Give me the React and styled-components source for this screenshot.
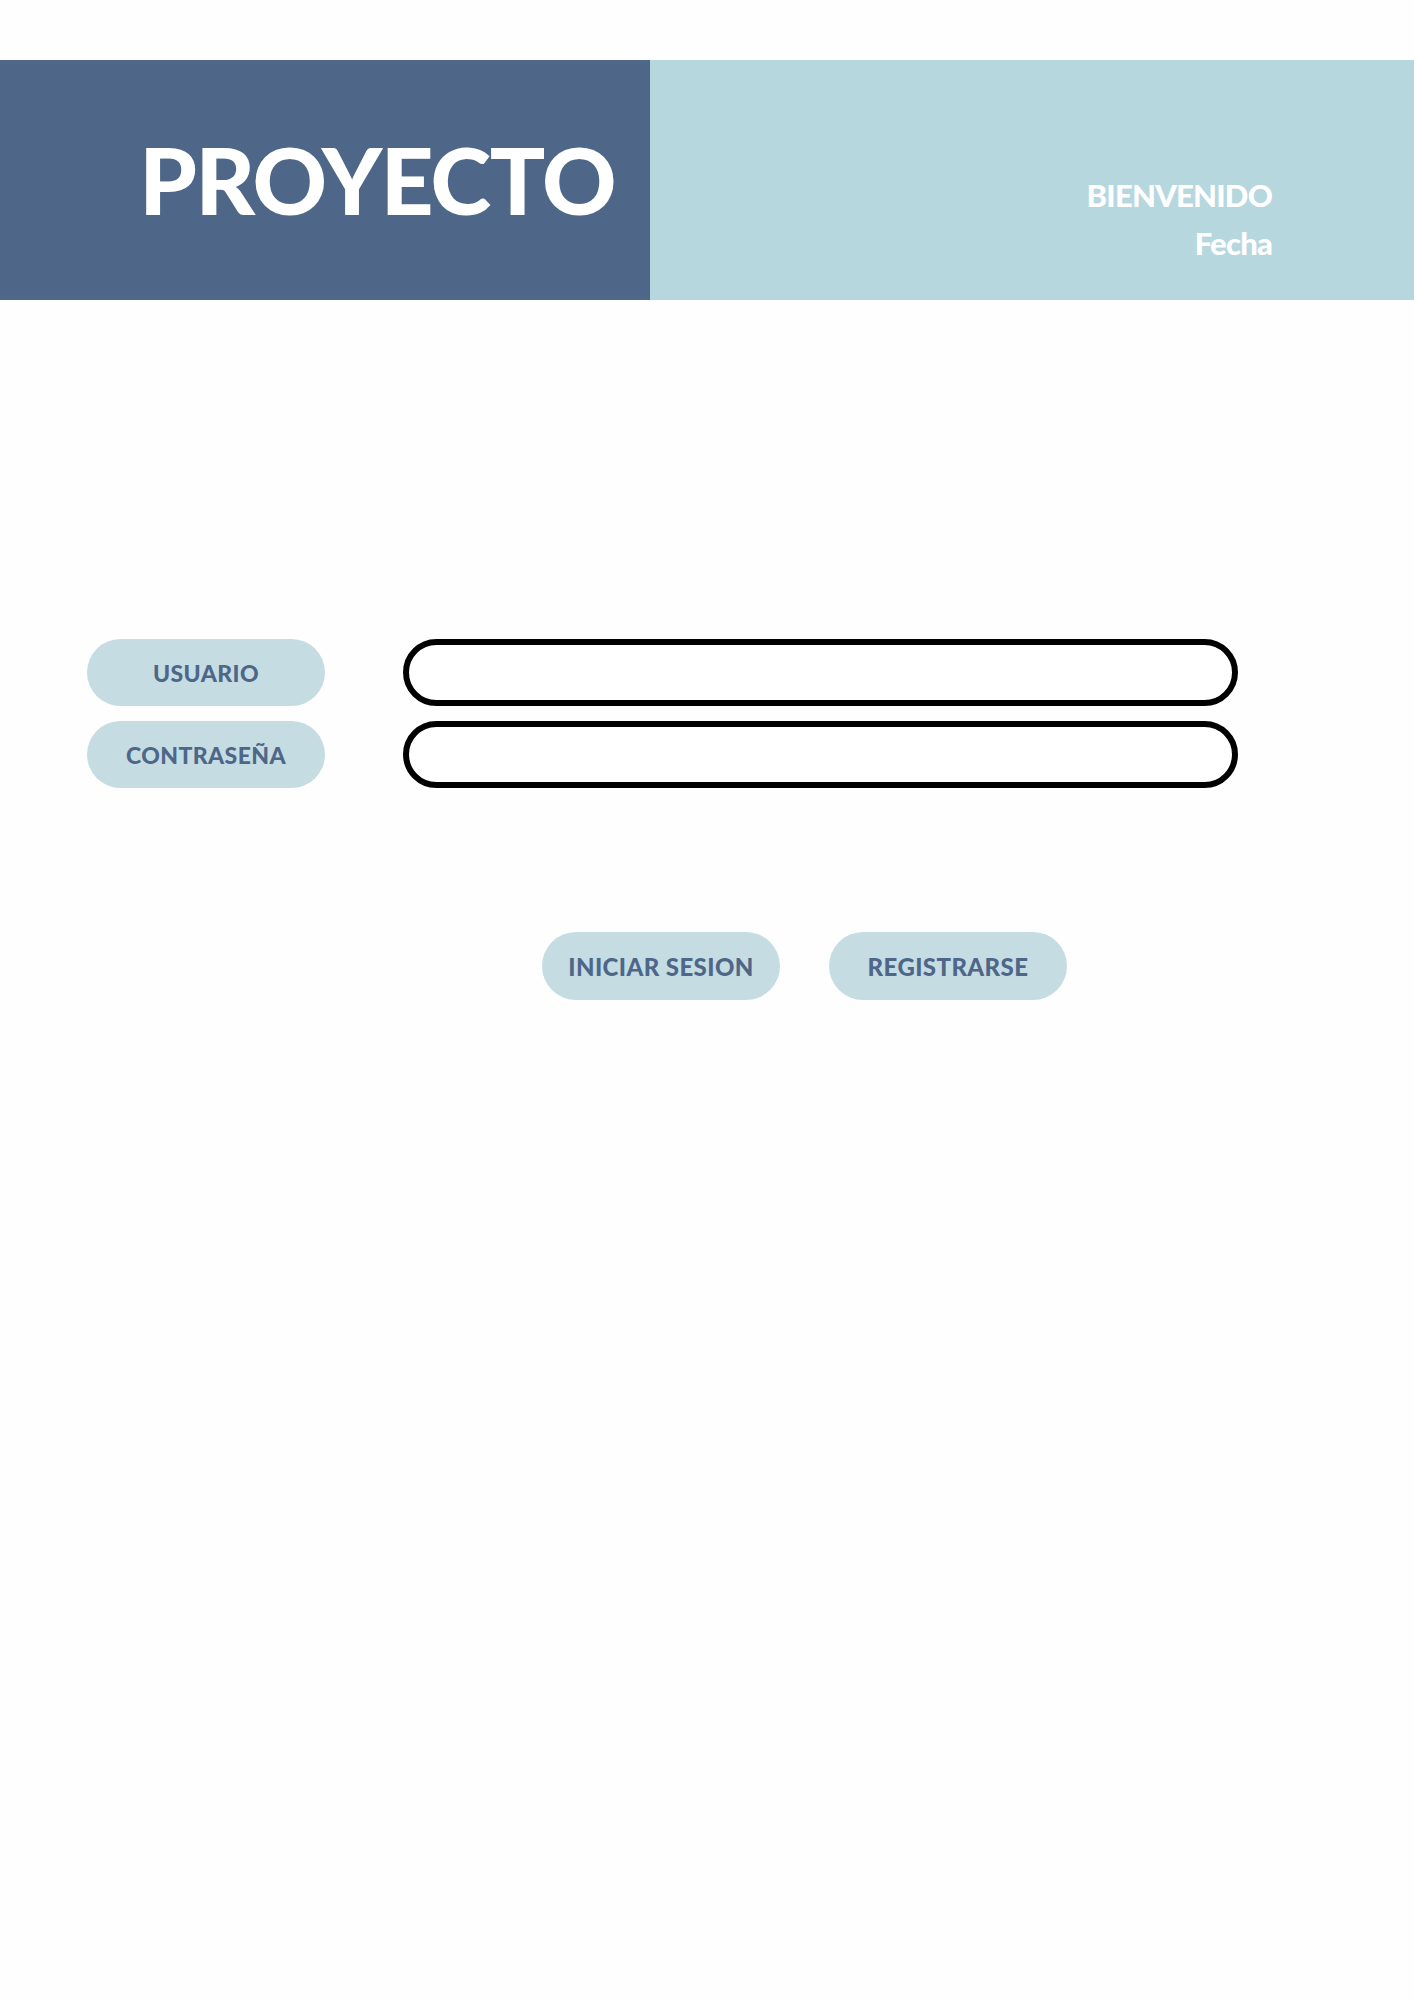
import React from "react";
import styled, { createGlobalStyle } from "styled-components";

const GlobalStyle = createGlobalStyle`
  body {
    margin: 0;
    padding: 0;
    background: #fefefe;
    font-family: "Lato", "Open Sans", sans-serif;
  }
  * { box-sizing: border-box; }
`;

const Page = styled.div`
  width: 1414px;
  min-height: 2000px;
  padding-top: 60px;
`;

const Header = styled.header`
  display: flex;
  height: 240px;
`;

const BrandPanel = styled.div`
  width: 650px;
  background: #4e6789;
  display: flex;
  align-items: center;
  justify-content: flex-end;
  padding-right: 35px;
`;

const Brand = styled.h1`
  margin: 0;
  color: #fff;
  font-family: "Lato", sans-serif;
  font-weight: 900;
  font-size: 92px;
  line-height: 1;
  letter-spacing: -1.5px;
`;

const WelcomePanel = styled.div`
  flex: 1;
  background: #b6d7de;
  display: flex;
  flex-direction: column;
  align-items: flex-end;
  justify-content: flex-end;
  padding: 0 142px 33px 0;
`;

const WelcomeText = styled.div`
  color: #fff;
  font-family: "Lato", sans-serif;
  font-weight: 900;
  font-size: 31px;
  line-height: 48px;
  letter-spacing: -0.8px;
`;

const Form = styled.form`
  display: grid;
  grid-template-columns: 238px 835px;
  column-gap: 78px;
  row-gap: 15px;
  margin: 339px 0 0 87px;
`;

const Pill = styled.div`
  width: 238px;
  height: 67px;
  border-radius: 34px;
  background: #c5dde2;
  color: #4e6789;
  display: flex;
  align-items: center;
  justify-content: center;
  font-family: "Lato", sans-serif;
  font-weight: 900;
  font-size: ${(p) => p.$size || 23}px;
  letter-spacing: 0.4px;
`;

const Field = styled.input`
  height: 67px;
  border: 6px solid #000;
  border-radius: 34px;
  background: #fff;
  outline: none;
  padding: 0 28px;
  font-size: 20px;
`;

const Actions = styled.div`
  display: flex;
  gap: 49px;
  margin: 144px 0 0 542px;
`;

const Button = styled(Pill).attrs({ as: "button" })`
  height: 68px;
  border: none;
  cursor: pointer;
`;

export default function App() {
  return (
    <>
      <GlobalStyle />
      <Page>
        <Header>
          <BrandPanel>
            <Brand>PROYECTO</Brand>
          </BrandPanel>
          <WelcomePanel>
            <WelcomeText>BIENVENIDO</WelcomeText>
            <WelcomeText>Fecha</WelcomeText>
          </WelcomePanel>
        </Header>
        <Form onSubmit={(e) => e.preventDefault()}>
          <Pill>USUARIO</Pill>
          <Field type="text" />
          <Pill>CONTRASEÑA</Pill>
          <Field type="password" />
        </Form>
        <Actions>
          <Button type="button" $size={24}>INICIAR SESION</Button>
          <Button type="button" $size={24}>REGISTRARSE</Button>
        </Actions>
      </Page>
    </>
  );
}
